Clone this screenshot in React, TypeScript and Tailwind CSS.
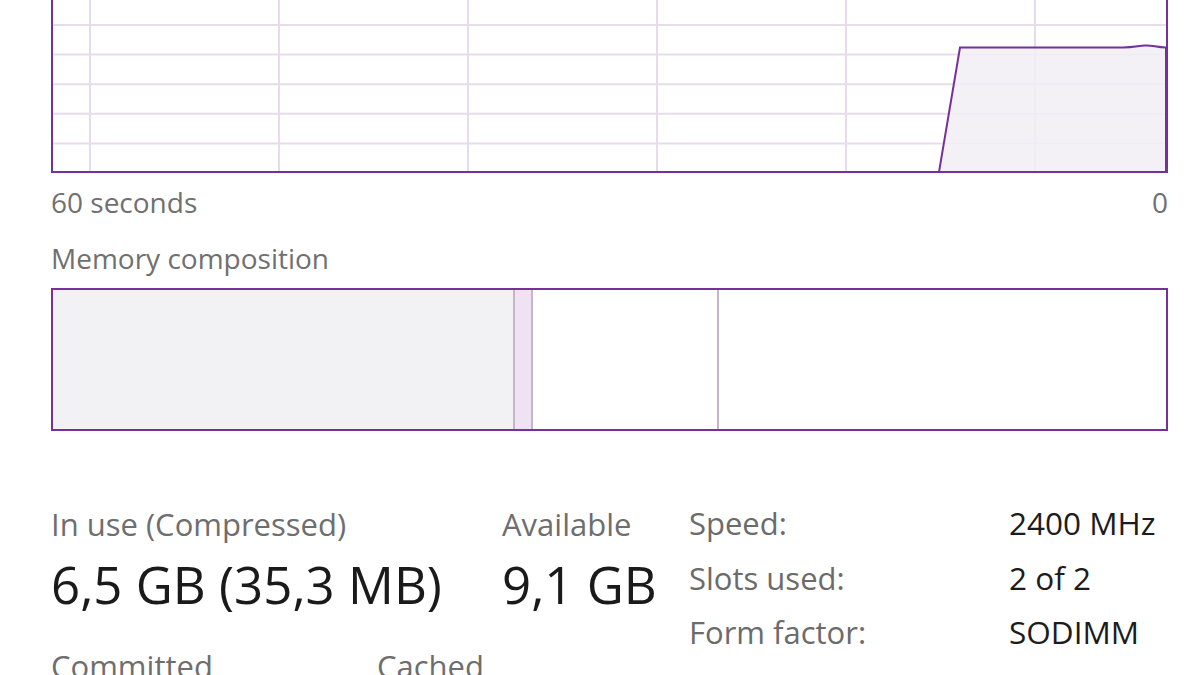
import React from 'react';

const PURPLE = '#76309a';

const UsageChart: React.FC = () => {
    const vLines = [37, 226, 415, 604, 793, 982];
    const hLines = [25, 54.6, 84.2, 113.8, 143.4];
    return (
        <div className="ml-[51px] w-[1117px] h-[173px] border-x-2 border-b-2 border-[#76309a] bg-white">
            <svg width="1113" height="171" viewBox="0 0 1113 171" className="block">
                {hLines.map((y) => (
                    <line key={`h${y}`} x1="0" x2="1113" y1={y} y2={y} stroke="#e7dcec" strokeWidth="2" />
                ))}
                {vLines.map((x) => (
                    <line key={`v${x}`} x1={x} x2={x} y1="0" y2="171" stroke="#e7dcec" strokeWidth="2" />
                ))}
                <path
                    d="M886 172 L907 47.5 L1070 47.5 C1080 47.5 1085 46 1092 45.5 C1100 45 1103 47.5 1113 47.5 L1113 172 Z"
                    fill="#f2eff5"
                    fillOpacity="0.85"
                    stroke={PURPLE}
                    strokeWidth="2"
                />
            </svg>
        </div>
    );
};

const CompositionBar: React.FC = () => (
    <div className="ml-[51px] w-[1117px] h-[143px] border-2 border-[#76309a] flex">
        <div className="w-[462px] bg-[#f2f1f4] border-r-2 border-[#c3b6ca]" />
        <div className="w-[18px] bg-[#efe2f2] border-r-2 border-[#c3b6ca]" />
        <div className="w-[186px] bg-white border-r-2 border-[#c3b6ca]" />
        <div className="flex-1 bg-white" />
    </div>
);

const Spec: React.FC<{ label: string; value: string }> = ({ label, value }) => (
    <div className="flex items-baseline">
        <span className="w-[320px] text-[31px] leading-none text-[#6b6b6b]">{label}</span>
        <span className="text-[31.5px] leading-none text-[#1c1c1c]">{value}</span>
    </div>
);

export default function App() {
    return (
        <div
            className="w-[1200px] h-[675px] overflow-hidden bg-white"
            style={{ fontFamily: '"Open Sans", "Noto Sans", sans-serif' }}
        >
            <UsageChart />

            <div className="ml-[51px] w-[1117px] mt-[15px] flex justify-between text-[28px] leading-none text-[#707070]">
                <span>60 seconds</span>
                <span>0</span>
            </div>

            <div className="ml-[51px] mt-[28px] text-[28px] leading-none text-[#707070]">Memory composition</div>

            <div className="mt-[16px]">
                <CompositionBar />
            </div>

            <div className="mt-[76px] flex">
                <div className="ml-[51px] w-[638px] pt-[2px] flex flex-col">
                    <div className="flex">
                        <div className="w-[451px] flex flex-col">
                            <span className="text-[31px] leading-none text-[#6e6e6e]">In use (Compressed)</span>
                            <span className="mt-[19px] text-[51px] leading-none text-[#1a1a1a]">6,5 GB (35,3 MB)</span>
                        </div>
                        <div className="flex flex-col">
                            <span className="text-[31px] leading-none text-[#6e6e6e]">Available</span>
                            <span className="mt-[19px] text-[51px] leading-none text-[#1a1a1a]">9,1 GB</span>
                        </div>
                    </div>
                    <div className="mt-[41px] flex text-[31px] leading-none text-[#6e6e6e]">
                        <span className="w-[326px]">Committed</span>
                        <span>Cached</span>
                    </div>
                </div>
                <div className="flex flex-col gap-[22.5px]">
                    <Spec label="Speed:" value="2400 MHz" />
                    <Spec label="Slots used:" value="2 of 2" />
                    <Spec label="Form factor:" value="SODIMM" />
                    <Spec label="Hardware reserved:" value="149 MB" />
                </div>
            </div>
        </div>
    );
}
